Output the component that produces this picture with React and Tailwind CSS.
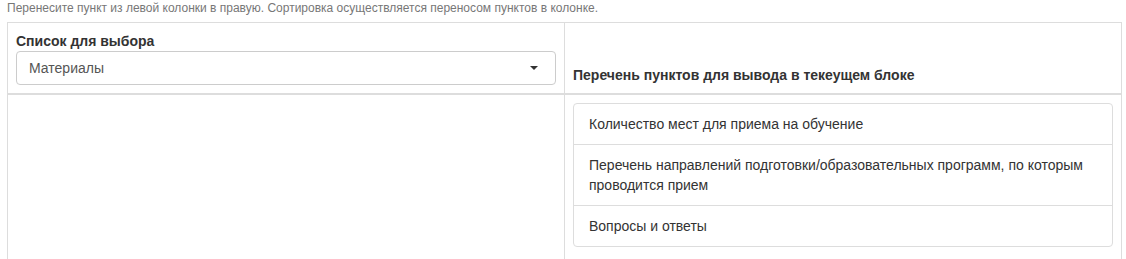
import React from 'react';

const items = [
  'Количество мест для приема на обучение',
  'Перечень направлений подготовки/образовательных программ, по которым проводится прием',
  'Вопросы и ответы',
];

const App = () => {
  return (
    <div className="bg-white px-[7px] font-['Liberation_Sans',Arial,sans-serif] text-[14px] leading-[20px] text-[#333]">
      <div className="mb-[5px] text-[12px] leading-[17px] text-[#777]">
        Перенесите пункт из левой колонки в правую. Сортировка осуществляется переносом пунктов в колонке.
      </div>
      <div className="grid w-[1115px] grid-cols-[557px_556px] border border-[#ddd]">
        {/* header */}
        <div className="flex flex-col justify-end border-r border-b-2 border-[#ddd] p-2">
          <div className="font-bold">Список для выбора</div>
          <div className="flex h-[34px] items-center justify-between rounded-[4px] border border-[#ccc] bg-white px-3 text-[#555]">
            <span>Материалы</span>
            <span className="mr-[5px] h-0 w-0 border-x-[4px] border-t-[4px] border-x-transparent border-t-[#333]" />
          </div>
        </div>
        <div className="flex flex-col justify-end border-b-2 border-[#ddd] p-2">
          <div className="font-bold">Перечень пунктов для вывода в текеущем блоке</div>
        </div>

        {/* body */}
        <div className="border-r border-[#ddd] p-2" />
        <div className="p-2 pb-6">
          <ul className="rounded-[4px] border border-[#ddd]">
            {items.map((item, i) => (
              <li
                key={i}
                className={`px-[15px] py-[10px] ${i > 0 ? 'border-t border-[#ddd]' : ''}`}
              >
                {item}
              </li>
            ))}
          </ul>
        </div>
      </div>
    </div>
  );
};

export default App;
